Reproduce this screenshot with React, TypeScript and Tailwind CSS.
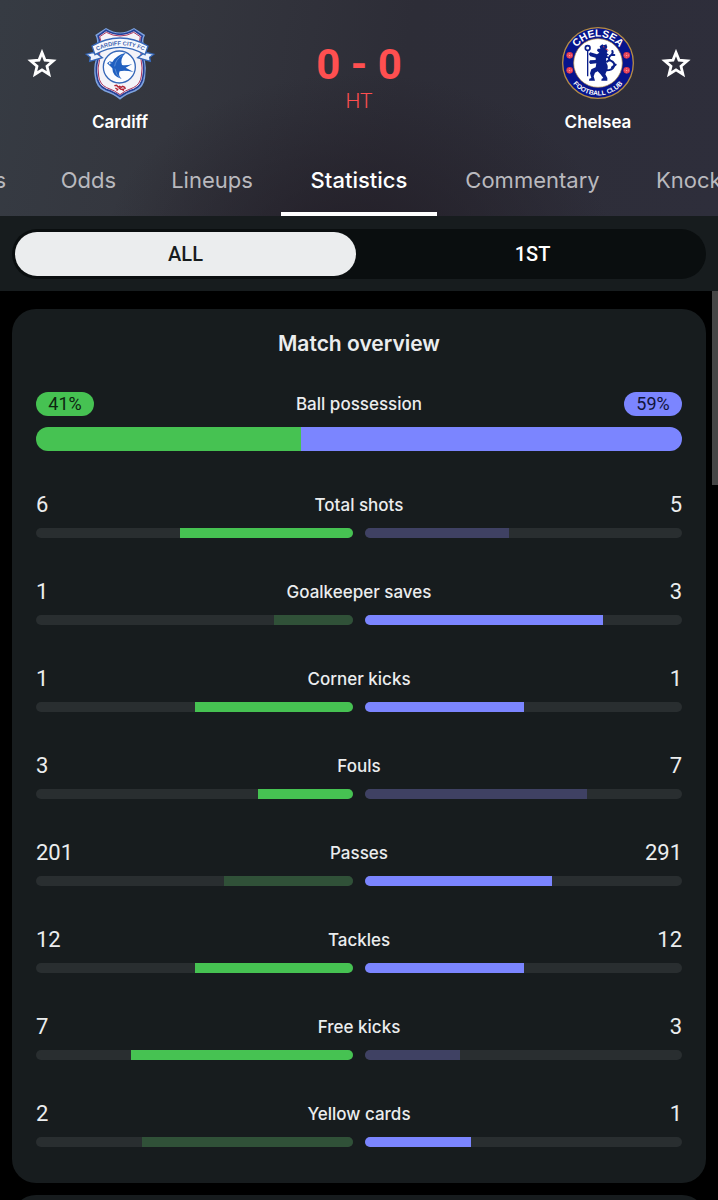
import React from "react";

type Stat = {
  label: string;
  home: number;
  away: number;
  homeDim?: boolean;
  awayDim?: boolean;
};

const stats: Stat[] = [
  { label: "Total shots", home: 6, away: 5, awayDim: true },
  { label: "Goalkeeper saves", home: 1, away: 3, homeDim: true },
  { label: "Corner kicks", home: 1, away: 1 },
  { label: "Fouls", home: 3, away: 7, awayDim: true },
  { label: "Passes", home: 201, away: 291, homeDim: true },
  { label: "Tackles", home: 12, away: 12 },
  { label: "Free kicks", home: 7, away: 3, awayDim: true },
  { label: "Yellow cards", home: 2, away: 1, homeDim: true },
];

function StarButton({ label }: { label: string }) {
  return (
    <button type="button" aria-label={label} className="flex h-9 w-9 items-center justify-center">
      <svg viewBox="0 0 30 30" className="h-[30px] w-[30px]" fill="none" stroke="#fff" strokeWidth="2.8">
        <path d="M15 3.6 L18 11.1 L26.2 11.8 L20 17.2 L21.9 25.2 L15 20.9 L8.1 25.2 L10 17.2 L3.8 11.8 L12 11.1 Z" />
      </svg>
    </button>
  );
}

function CardiffCrest() {
  return (
    <svg viewBox="27 18 216 222" className="h-[74px] w-[72px]" role="img" aria-label="Cardiff crest">
      <defs>
        <path id="cardiff-arc" d="M60 95 Q135 56 212 95" />
      </defs>
      <path
        d="M93 27 Q114 40 135 40 Q156 40 177 27 L207 46 Q198 62 207 84 L207 118 Q213 145 208 172 Q205 200 180 212 Q150 222 135 236 Q120 222 90 212 Q65 200 62 172 Q57 145 65 118 L65 84 Q73 62 64 46 Z"
        fill="#f4f3f8"
        stroke="#7da4df"
        strokeWidth="5"
      />
      <path
        d="M93 31 Q114 43 135 43 Q156 43 177 31 L202 48 Q194 64 203 84 L203 118 Q209 145 204 170 Q201 197 178 208 Q150 217 135 230 Q120 217 92 208 Q69 197 66 170 Q61 145 69 118 L69 84 Q77 64 69 48 Z"
        fill="none"
        stroke="#253f96"
        strokeWidth="5"
      />
      <path
        d="M94 37 Q114 48 135 48 Q156 48 176 37 L196 50 Q190 64 198 84 L198 118 Q204 145 199 168 Q196 193 175 203 Q149 212 135 224 Q121 212 95 203 Q74 193 71 168 Q66 145 74 118 L74 84 Q82 64 74 50 Z"
        fill="none"
        stroke="#a8355e"
        strokeWidth="3"
      />
      <path d="M53 98 L34 103 L46 112 L44 124 L82 113 L66 101 Z" fill="#eef2fb" stroke="#3567b8" strokeWidth="4" />
      <path d="M217 98 L236 103 L224 112 L226 124 L188 113 L204 101 Z" fill="#eef2fb" stroke="#3567b8" strokeWidth="4" />
      <path
        d="M51 78 Q92 54 135 54 Q178 54 219 78 L210 104 Q172 82 135 82 Q98 82 60 104 Z"
        fill="#f6f8fd"
        stroke="#3567b8"
        strokeWidth="4"
      />
      <text fontFamily="Liberation Sans, sans-serif" fontWeight="700" fontSize="17" fill="#3b5fae" textAnchor="middle">
        <textPath href="#cardiff-arc" startOffset="50%">
          CARDIFF CITY FC
        </textPath>
      </text>
      <circle cx="133" cy="141" r="48" fill="#fbfcff" stroke="#3567b8" strokeWidth="4" />
      <path
        d="M96 130 Q104 121 112 126 Q122 106 153 98 Q134 115 141 135 Q155 137 172 132 L152 143 L176 156 Q148 150 134 154 Q128 166 140 177 Q112 170 112 145 Q105 138 96 130 Z"
        fill="#1f5fc0"
      />
      <path d="M99 129 L104 125 L110 129 L104 134 Z" fill="#e3ebfa" stroke="#1f5fc0" strokeWidth="2" />
      <path d="M119 139 Q121 119 143 105 M120 146 Q123 165 134 173" fill="none" stroke="#75a0df" strokeWidth="2" />
      <path
        d="M118 197 L125 196 L129 201 L134 199 L138 202 L143 199 L149 202 L151 207 M121 204 L128 208 L125 212 M131 203 L138 208 L146 207 L144 213"
        fill="none"
        stroke="#b32233"
        strokeWidth="4"
      />
    </svg>
  );
}

function Rosette({ cx, cy }: { cx: number; cy: number }) {
  return (
    <g>
      <circle cx={cx} cy={cy} r="10" fill="#e2384d" />
      <circle cx={cx} cy={cy} r="5.5" fill="none" stroke="#f4a0a8" strokeWidth="2" strokeDasharray="4 3" />
      <circle cx={cx} cy={cy} r="2" fill="#f9c0c0" />
    </g>
  );
}

function ChelseaCrest() {
  return (
    <svg viewBox="24 18 222 222" className="h-[74px] w-[74px]" role="img" aria-label="Chelsea crest">
      <defs>
        <path id="chelsea-top" d="M56 129 A79 79 0 0 1 214 129" />
        <path id="chelsea-bottom" d="M38 129 A97 97 0 0 0 232 129" />
      </defs>
      <circle cx="135" cy="129" r="106" fill="#07148c" stroke="#b58c45" strokeWidth="4" />
      <circle cx="135" cy="129" r="73" fill="#fff" stroke="#b58c45" strokeWidth="2" />
      <text fontFamily="Liberation Sans, sans-serif" fontWeight="700" fontSize="31" fill="#fff" textAnchor="middle">
        <textPath href="#chelsea-top" startOffset="50%">
          CHELSEA
        </textPath>
      </text>
      <text fontFamily="Liberation Sans, sans-serif" fontWeight="700" fontSize="20" fill="#fff" textAnchor="middle">
        <textPath href="#chelsea-bottom" startOffset="50%">
          FOOTBALL CLUB
        </textPath>
      </text>
      <Rosette cx={50} cy={106} />
      <Rosette cx={50} cy={151} />
      <Rosette cx={221} cy={106} />
      <Rosette cx={221} cy={151} />
      <circle cx="104" cy="84" r="7" fill="none" stroke="#0a1e8a" strokeWidth="5" />
      <path d="M104 92 V169" stroke="#0a1e8a" strokeWidth="4" />
      <path
        d="M140 79 L148 73 L152 76 L160 73 L163 81 L160 87 L164 94 L161 99 L168 104 L162 106 L166 113 L159 115 L160 128 Q169 142 160 155 L157 163 L163 174 L163 182 L145 182 L146 176 L151 174 L142 162 L134 154 L126 158 L122 169 L126 182 L108 182 L109 176 L115 174 L111 160 L115 148 L128 142 L130 130 L112 132 L108 127 L111 121 L128 120 L128 113 L112 109 L107 102 L112 97 L132 103 L139 98 L132 92 L134 86 L142 86 Z"
        fill="#0a1e8a"
      />
      <path
        d="M160 151 Q178 151 183 139 Q187 128 173 122 Q163 116 171 108 Q182 101 178 93 M177 142 L188 134 M170 119 L162 125 M175 105 L184 105"
        fill="none"
        stroke="#0a1e8a"
        strokeWidth="6"
        strokeLinecap="round"
      />
      <path d="M158 87 L166 91 M150 80 L154 81" stroke="#e2384d" strokeWidth="3" />
    </svg>
  );
}

function Team({ name, crest }: { name: string; crest: React.ReactNode }) {
  return (
    <div className="flex w-24 flex-col items-center">
      {crest}
      <span className="mt-2 font-['Inter',sans-serif] text-[17px] leading-7 font-semibold text-white">{name}</span>
    </div>
  );
}

function Tab({ children, className = "" }: { children: React.ReactNode; className?: string }) {
  return (
    <a href="#" className={`flex min-w-0 items-center whitespace-nowrap ${className}`}>
      {children}
    </a>
  );
}

function Header() {
  return (
    <header className="overflow-hidden bg-[radial-gradient(ellipse_at_50%_115%,#231f28_0%,transparent_50%),linear-gradient(100deg,#363b43_0%,#34363e_25%,#2d2d37_55%,#2e2e3b_100%)]">
      <div className="flex h-[145px] items-start justify-between px-6 pt-[26px]">
        <div className="flex items-start gap-3">
          <div className="pt-5">
            <StarButton label="Follow Cardiff" />
          </div>
          <Team name="Cardiff" crest={<CardiffCrest />} />
        </div>
        <div className="flex flex-col items-center pt-[15px] font-['Roboto',sans-serif] text-[#ff4f50]">
          <span className="text-[42px] leading-12 font-bold">0 - 0</span>
          <span className="text-[21px] leading-6 font-light">HT</span>
        </div>
        <div className="flex items-start gap-3">
          <Team name="Chelsea" crest={<ChelseaCrest />} />
          <div className="pt-5">
            <StarButton label="Follow Chelsea" />
          </div>
        </div>
      </div>
      <nav className="grid h-[71px] grid-cols-[minmax(0,34fr)_minmax(0,109fr)_minmax(0,138fr)_minmax(0,156fr)_minmax(0,191fr)_minmax(0,90fr)] font-['Inter',sans-serif] text-[22px] text-[#b9b9be]">
        <Tab className="justify-end pr-7">Details</Tab>
        <Tab className="justify-center">Odds</Tab>
        <Tab className="justify-center">Lineups</Tab>
        <Tab className="justify-center border-b-4 border-white pt-1 font-medium text-white">Statistics</Tab>
        <Tab className="justify-center">Commentary</Tab>
        <Tab className="pl-7">Knockout</Tab>
      </nav>
    </header>
  );
}

function PeriodSwitch() {
  return (
    <div className="bg-[#171c1e] px-3 pt-[13px] pb-3 font-['Roboto',sans-serif] text-xl font-medium">
      <div className="flex h-[50px] gap-1.5 rounded-full bg-[#0a0e0f] p-[3px]">
        <button type="button" aria-pressed="true" className="flex-1 rounded-full bg-[#ebedee] text-[#171c1e]">
          ALL
        </button>
        <button type="button" aria-pressed="false" className="flex-1 rounded-full text-white">
          1ST
        </button>
      </div>
    </div>
  );
}

function StatRow({ stat }: { stat: Stat }) {
  const total = stat.home + stat.away;
  return (
    <div>
      <div className="grid h-7 grid-cols-[1fr_auto_1fr] items-center">
        <span className="font-['Roboto',sans-serif] text-[22px] font-normal">{stat.home}</span>
        <span>{stat.label}</span>
        <span className="text-right font-['Roboto',sans-serif] text-[22px] font-normal">{stat.away}</span>
      </div>
      <div className="mt-[9px] flex gap-3">
        <div className="flex h-2.5 flex-1 justify-end overflow-hidden rounded-full bg-[#292e30]">
          <div
            className={stat.homeDim ? "bg-[#305138]" : "bg-[#46c252]"}
            style={{ width: `${(stat.home / total) * 100}%` }}
          />
        </div>
        <div className="flex h-2.5 flex-1 overflow-hidden rounded-full bg-[#292e30]">
          <div
            className={stat.awayDim ? "bg-[#3f4163]" : "bg-[#7b85ff]"}
            style={{ width: `${(stat.away / total) * 100}%` }}
          />
        </div>
      </div>
    </div>
  );
}

function Possession() {
  return (
    <div>
      <div className="flex h-6 items-center justify-between">
        <span className="flex h-6 w-[58px] items-center justify-center rounded-full bg-[#46c252] font-['Roboto',sans-serif] text-lg font-normal text-[#0d2410]">
          41%
        </span>
        <span>Ball possession</span>
        <span className="flex h-6 w-[58px] items-center justify-center rounded-full bg-[#7b85ff] font-['Roboto',sans-serif] text-lg font-normal text-[#11143a]">
          59%
        </span>
      </div>
      <div className="mt-[11px] flex h-6 overflow-hidden rounded-full">
        <div className="bg-[#46c252]" style={{ width: "41%" }} />
        <div className="flex-1 bg-[#7b85ff]" />
      </div>
    </div>
  );
}

export default function App() {
  return (
    <div className="flex h-screen flex-col bg-black">
      <Header />
      <PeriodSwitch />
      <main className="relative min-h-0 flex-1 overflow-hidden">
        <div className="h-full overflow-y-auto px-3 pt-[18px] [scrollbar-width:none]">
          <section className="rounded-3xl bg-[#171c1e] px-6 pt-[21px] pb-9 font-['Inter',sans-serif] text-[17px] leading-7 font-medium text-[#ebedee]">
            <h2 className="mb-[34px] text-center text-[21px] leading-7 font-semibold">Match overview</h2>
            <div className="flex flex-col gap-10">
              <Possession />
              {stats.map((stat) => (
                <StatRow key={stat.label} stat={stat} />
              ))}
            </div>
          </section>
          <section className="mt-3 h-24 rounded-3xl bg-[#171c1e]" />
        </div>
        <div className="absolute top-0 right-0 h-[194px] w-1.5 bg-[#464646]" />
      </main>
    </div>
  );
}
